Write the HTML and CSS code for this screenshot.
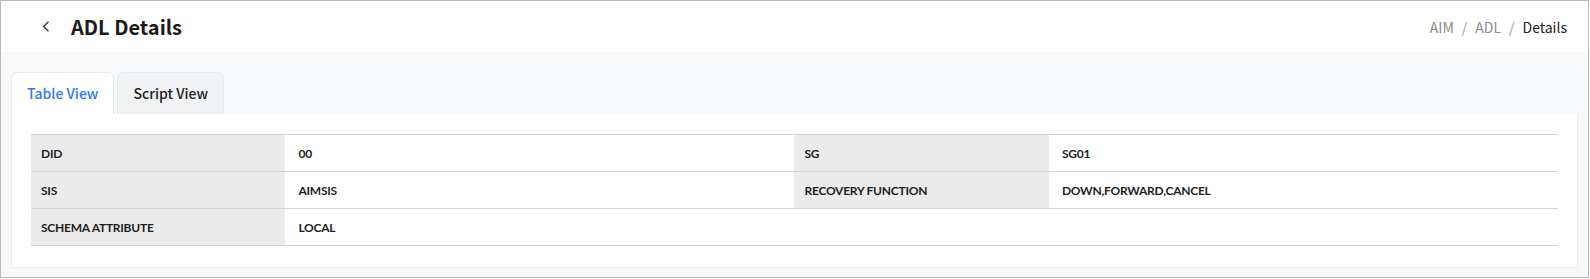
FILE: index.html
```html
<!DOCTYPE html>
<html lang="en">
<head>
  <meta charset="UTF-8">
  <meta name="viewport" content="width=device-width, initial-scale=1.0">
  <title>ADL Details</title>
  <link rel="stylesheet" href="styles.css">
</head>
<body>

  <div class="window">
    <div class="header">
      <div class="title-wrap">
        <button class="back" aria-label="Back">
          <svg width="8" height="11" viewBox="0 0 8 11"><path d="M6.5 0.8 L1.5 5.5 L6.5 10.2" fill="none" stroke="#333" stroke-width="1.3"/></svg>
        </button>
        <h1 class="title">ADL Details</h1>
      </div>
      <div class="breadcrumb">
        <span class="crumb">AIM</span>
        <span class="sep">/</span>
        <span class="crumb">ADL</span>
        <span class="sep">/</span>
        <span class="crumb current">Details</span>
      </div>
    </div>

    <div class="content">
      <div class="tabs">
        <div class="tab active">Table View</div>
        <div class="tab">Script View</div>
      </div>
      <div class="panel">
        <table class="detail">
          <tr>
            <th>DID</th>
            <td>00</td>
            <th>SG</th>
            <td>SG01</td>
          </tr>
          <tr>
            <th>SIS</th>
            <td>AIMSIS</td>
            <th>RECOVERY FUNCTION</th>
            <td>DOWN,FORWARD,CANCEL</td>
          </tr>
          <tr>
            <th>SCHEMA ATTRIBUTE</th>
            <td colspan="3">LOCAL</td>
          </tr>
        </table>
      </div>
    </div>
  </div>

</body>
</html>
```

FILE: styles.css
```css
body {
  margin: 0;
  font-family: "Noto Sans CJK KR", "Noto Sans", sans-serif;
  background-color: white;
  color: #222;
}

.window {
  box-sizing: border-box;
  width: 1589px;
  height: 278px;
  border: 1px solid #b9b9b9;
  display: flex;
  flex-direction: column;
}

.header {
  height: 51px;
  background-color: white;
  display: flex;
  justify-content: space-between;
  align-items: center;
  padding: 0 21px 0 40px;
}

.title-wrap {
  display: flex;
  align-items: center;
  gap: 20px;
}

.back {
  border: none;
  background: none;
  padding: 0;
  width: 10px;
  height: 14px;
  display: flex;
  align-items: center;
  justify-content: center;
  cursor: pointer;
}

.title {
  margin: 0;
  font-size: 20px;
  font-weight: 700;
  color: #1a1a1a;
  line-height: 24px;
}

.breadcrumb {
  display: flex;
  gap: 8px;
  font-size: 14px;
  color: #8a8a8a;
}

.breadcrumb .sep {
  color: #9a9a9a;
}

.breadcrumb .current {
  color: #222;
}

.content {
  flex: 1;
  background-color: #f7f8fa;
  padding: 20px 10px 9px 10px;
  display: flex;
  flex-direction: column;
}

.tabs {
  display: flex;
  gap: 3px;
  height: 42px;
}

.tab {
  box-sizing: border-box;
  padding: 0 15px;
  height: 42px;
  line-height: 40px;
  font-size: 14px;
  font-weight: 500;
  color: #222;
  background-color: #f1f2f4;
  border: 1px solid #e8e9eb;
  border-bottom: none;
  border-radius: 6px 6px 0 0;
}

.tab.active {
  background-color: white;
  color: #2f7bf5;
}

.panel {
  flex: 1;
  background-color: white;
  border: 1px solid #ebecee;
  border-top: none;
  padding: 20px 19px 20px 19px;
}

.detail {
  width: 100%;
  border-collapse: collapse;
  font-family: Lato, "Noto Sans", sans-serif;
  font-size: 12px;
  letter-spacing: -0.25px;
  color: #1e1e1e;
}

.detail tr {
  border-top: 1px solid #d4d4d4;
  border-bottom: 1px solid #d4d4d4;
}

.detail th,
.detail td {
  height: 36px;
  padding: 0 10px;
  text-align: left;
  font-weight: 700;
}

.detail th {
  width: 16.66%;
  background-color: #ebebeb;
}

.detail td {
  width: 33.33%;
  padding-left: 13px;
}
```
